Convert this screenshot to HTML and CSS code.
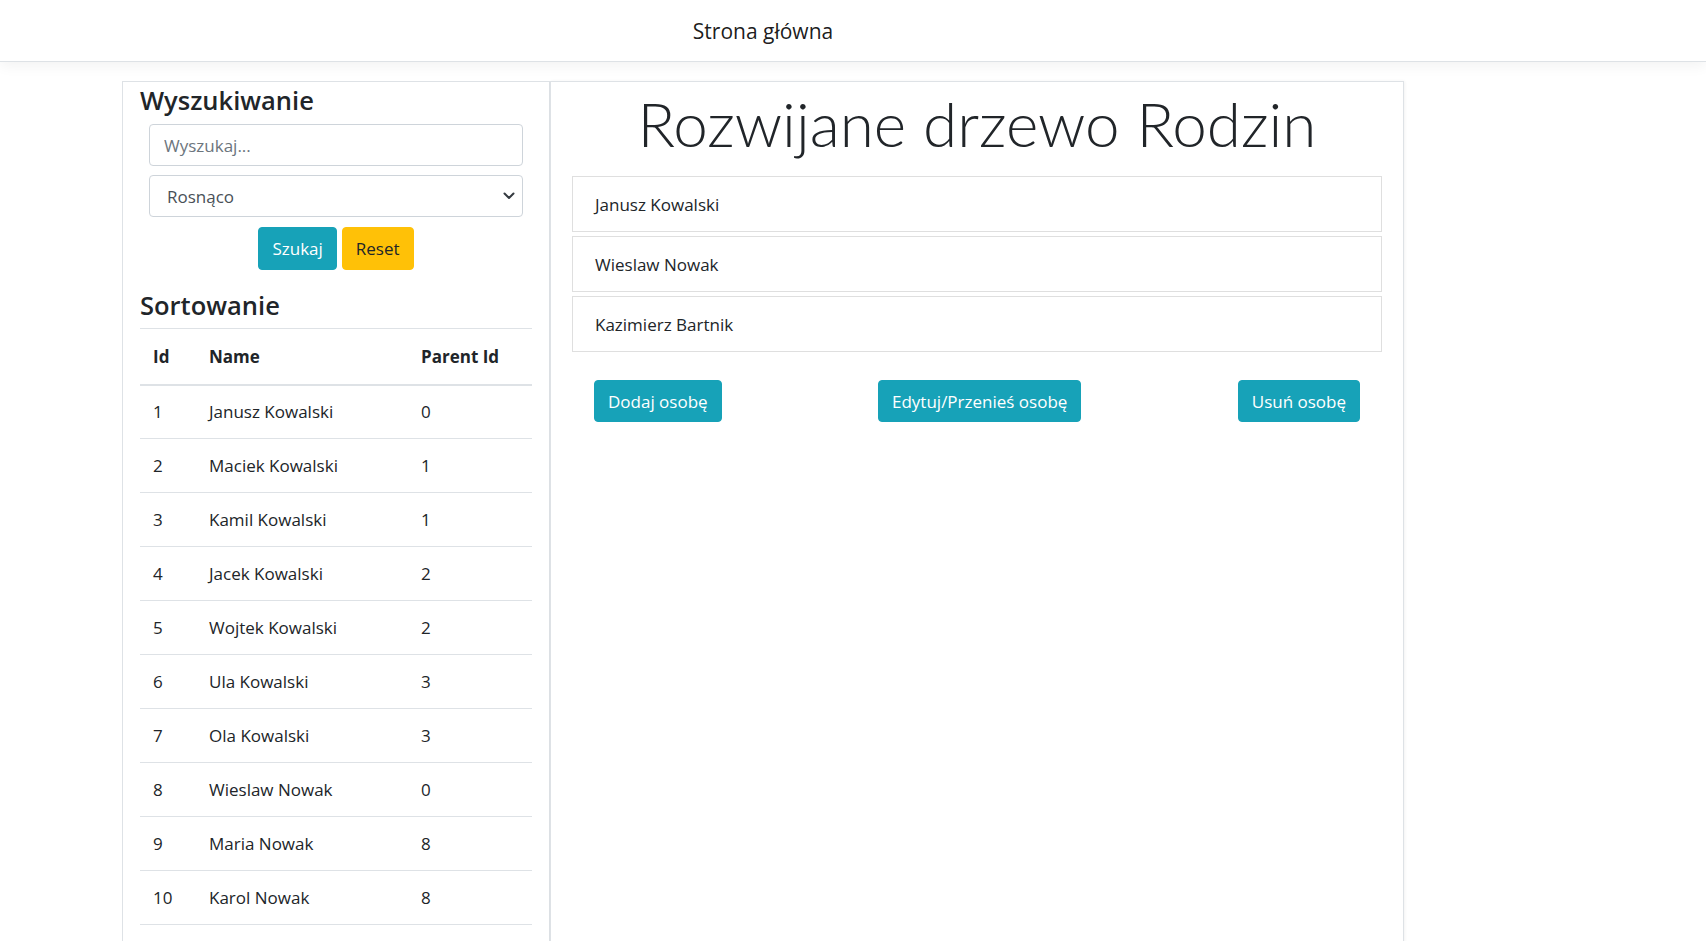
FILE: index.html
```html
<!DOCTYPE html>
<html lang="pl">
<head>
<meta charset="utf-8">
<title>Strona główna</title>
<link rel="stylesheet" href="styles.css">
</head>
<body>
<nav class="navbar">
  <div class="nav-inner"><a class="brand" href="#">Strona główna</a></div>
</nav>
<main class="layout">
  <aside class="side">
    <h3 class="side-title">Wyszukiwanie</h3>
    <div class="search-form">
      <input class="field" type="text" placeholder="Wyszukaj...">
      <div class="select-wrap">
        <select class="field select"><option>Rosnąco</option><option>Malejąco</option></select>
        <svg class="chev" width="12" height="8" viewBox="0 0 12 8"><path d="M1.5 1.5 L6 6 L10.5 1.5" fill="none" stroke="#343a40" stroke-width="2" stroke-linecap="round" stroke-linejoin="round"/></svg>
      </div>
      <div class="btn-row">
        <button class="btn btn-info">Szukaj</button>
        <button class="btn btn-warning">Reset</button>
      </div>
    </div>
    <h3 class="side-title sort-title">Sortowanie</h3>
    <table class="table">
      <thead>
        <tr><th class="c-id">Id</th><th class="c-name">Name</th><th>Parent Id</th></tr>
      </thead>
      <tbody>
        <tr><td>1</td><td>Janusz Kowalski</td><td>0</td></tr>
        <tr><td>2</td><td>Maciek Kowalski</td><td>1</td></tr>
        <tr><td>3</td><td>Kamil Kowalski</td><td>1</td></tr>
        <tr><td>4</td><td>Jacek Kowalski</td><td>2</td></tr>
        <tr><td>5</td><td>Wojtek Kowalski</td><td>2</td></tr>
        <tr><td>6</td><td>Ula Kowalski</td><td>3</td></tr>
        <tr><td>7</td><td>Ola Kowalski</td><td>3</td></tr>
        <tr><td>8</td><td>Wieslaw Nowak</td><td>0</td></tr>
        <tr><td>9</td><td>Maria Nowak</td><td>8</td></tr>
        <tr><td>10</td><td>Karol Nowak</td><td>8</td></tr>
      </tbody>
    </table>
  </aside>
  <section class="tree">
    <h1 class="display">Rozwijane drzewo Rodzin</h1>
    <ul class="list">
      <li class="list-item">Janusz Kowalski</li>
      <li class="list-item">Wieslaw Nowak</li>
      <li class="list-item">Kazimierz Bartnik</li>
    </ul>
    <div class="actions">
      <button class="btn btn-info">Dodaj osobę</button>
      <button class="btn btn-info">Edytuj/Przenieś osobę</button>
      <button class="btn btn-info">Usuń osobę</button>
    </div>
  </section>
</main>
</body>
</html>
```
FILE: styles.css
```css
* { box-sizing: border-box; }

html, body {
  margin: 0;
  padding: 0;
  background: #fff;
}

body {
  font-family: "Open Sans", "Noto Sans", sans-serif;
  font-size: 17px;
  color: #212529;
}

.navbar {
  height: 62px;
  border-bottom: 1px solid #dee2e6;
  box-shadow: 0 4px 13px rgba(0, 0, 0, 0.05);
  display: flex;
  align-items: center;
  background: #fff;
}

.nav-inner {
  margin-left: 122px;
  width: 1282px;
  text-align: center;
}

.brand {
  font-size: 21px;
  color: rgba(0, 0, 0, 0.9);
  text-decoration: none;
  line-height: 30px;
}

.layout {
  display: flex;
  margin: 19px 0 0 122px;
  width: 1282px;
}

.side {
  width: 428px;
  flex: none;
  border: 1px solid #dee2e6;
  padding: 3px 17px 20px;
}

.side-title {
  font-size: 25.5px;
  font-weight: 600;
  line-height: 30px;
  margin: 0 0 9px;
}

.sort-title {
  margin: 20px 0 8px;
}

.search-form {
  padding: 0 9px;
}

.field {
  display: block;
  width: 100%;
  height: 42px;
  border: 1px solid #ced4da;
  border-radius: 4px;
  padding: 0 14px;
  font-family: inherit;
  font-size: 17px;
  color: #495057;
  background: #fff;
}

.field::placeholder {
  color: #6c757d;
}

.select-wrap {
  position: relative;
  margin-top: 9px;
}

.select {
  appearance: none;
  -webkit-appearance: none;
  padding-left: 17px;
}

.chev {
  position: absolute;
  right: 8px;
  top: 17px;
}

.btn-row {
  display: flex;
  justify-content: center;
  gap: 5px;
  margin-top: 10px;
}

.btn {
  font-family: inherit;
  font-size: 17px;
  height: 43px;
  padding: 0 13px;
  border-radius: 4px;
  border: 1px solid transparent;
  cursor: pointer;
  line-height: 1;
}

.btn-info {
  background: #17a2b8;
  border-color: #17a2b8;
  color: #fff;
}

.btn-warning {
  background: #ffc107;
  border-color: #ffc107;
  color: #212529;
}

.table {
  width: 100%;
  border-collapse: collapse;
}

.table th,
.table td {
  text-align: left;
  padding: 0 13px;
  vertical-align: middle;
}

.table th {
  height: 56px;
  font-weight: 700;
  border-top: 1px solid #dee2e6;
  border-bottom: 2px solid #dee2e6;
}

.table td {
  height: 54px;
  border-bottom: 1px solid #dee2e6;
}

.c-id { width: 56px; }
.c-name { width: 212px; }

.tree {
  flex: 1;
  border: 1px solid #dee2e6;
  box-shadow: 1px 0 3px rgba(0, 0, 0, 0.05);
  padding: 0 21px;
}

.display {
  font-family: "Lato", "Open Sans", sans-serif;
  font-weight: 300;
  font-size: 62px;
  line-height: 74px;
  text-align: center;
  margin: 4px 0 16px;
  color: #212529;
}

.list {
  list-style: none;
  margin: 0;
  padding: 0;
  display: flex;
  flex-direction: column;
  gap: 4px;
}

.list-item {
  height: 56px;
  border: 1px solid rgba(0, 0, 0, 0.125);
  padding: 0 22px;
  display: flex;
  align-items: center;
}

.actions {
  display: flex;
  justify-content: space-between;
  margin-top: 28px;
  padding: 0 22px;
}

.actions .btn {
  height: 42px;
}
```
